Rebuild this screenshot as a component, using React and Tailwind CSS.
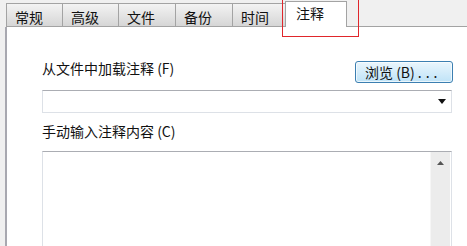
import React from "react";

const TABS = [
  { name: "常规", w: "w-[56px]" },
  { name: "高级", w: "w-[56px]" },
  { name: "文件", w: "w-[57px]" },
  { name: "备份", w: "w-[57px]" },
  { name: "时间", w: "w-[53px]" },
];

function Tab({ tab }) {
  return (
    <div
      className={`${tab.w} h-[24px] border-t border-l border-b border-[#a3a3a3] bg-gradient-to-b from-[#f3f3f3] to-[#d6d6d6] pl-[8px] pt-[5px] text-[14px] leading-[16px] text-[#111]`}
    >
      {tab.name}
    </div>
  );
}

export default function App() {
  return (
    <div
      className="relative w-[467px] h-[246px] overflow-hidden bg-[#f0f0f0]"
      style={{ fontFamily: '"Noto Sans CJK SC", "Noto Sans", sans-serif' }}
    >
      {/* tab strip */}
      <div className="flex items-end h-[27px] pl-[6px]">
        {TABS.map((t) => (
          <Tab key={t.name} tab={t} />
        ))}
        <div className="w-[62px] h-[26px] border-t border-l border-r border-[#a3a3a3] bg-white pl-[10px] pt-[3px] text-[14px] leading-[16px] text-[#111]">
          注释
        </div>
        <div className="flex-1 h-[1px] bg-[#a3a3a3]" />
      </div>

      {/* panel */}
      <div className="ml-[5px] h-[219px] border-l-2 border-[#a8a8b0] bg-white pl-[35px] pr-[15px] pt-[31px]">
        <div className="flex items-start justify-between">
          <div className="text-[14px] leading-[20px] text-[#111]">
            从文件中加载注释 (F)
          </div>
          <button className="mt-[3px] -mr-[1px] w-[98px] h-[22px] rounded-[3px] border border-[#3c7fb1] bg-gradient-to-b from-[#eaf6fd] to-[#bfe3f7] shadow-[inset_0_0_0_1px_#ffffffaa] pl-[9px] text-left text-[14px] leading-[18px] text-[#111]">
            浏览 (B)<span className="tracking-[4px] pl-[3px]">...</span>
          </button>
        </div>

        <div className="mt-[7px] h-[23px] flex items-center justify-end border border-[#dde1e7] border-t-[#abadb3] bg-white pr-[5px]">
          <svg width="8" height="5" viewBox="0 0 8 5">
            <path d="M0 0 H8 L4 5 Z" fill="#111" />
          </svg>
        </div>

        <div className="mt-[8px] text-[14px] leading-[20px] text-[#111]">
          手动输入注释内容 (C)
        </div>

        <div className="mt-[10px] h-[110px] flex justify-end border border-[#dde1e7] border-t-[#abadb3] bg-white pr-[1px]">
          <div className="w-[20px] h-full bg-[#ececec] border-l border-[#f6f6f6] flex justify-center pt-[9px]">
            <svg width="7" height="4" viewBox="0 0 7 4">
              <path d="M3.5 0 L7 4 H0 Z" fill="#555" />
            </svg>
          </div>
        </div>
      </div>

      {/* red highlight */}
      <div className="absolute left-[282px] top-[-1px] w-[77px] h-[38px] border border-[#e0262b]" />
    </div>
  );
}
